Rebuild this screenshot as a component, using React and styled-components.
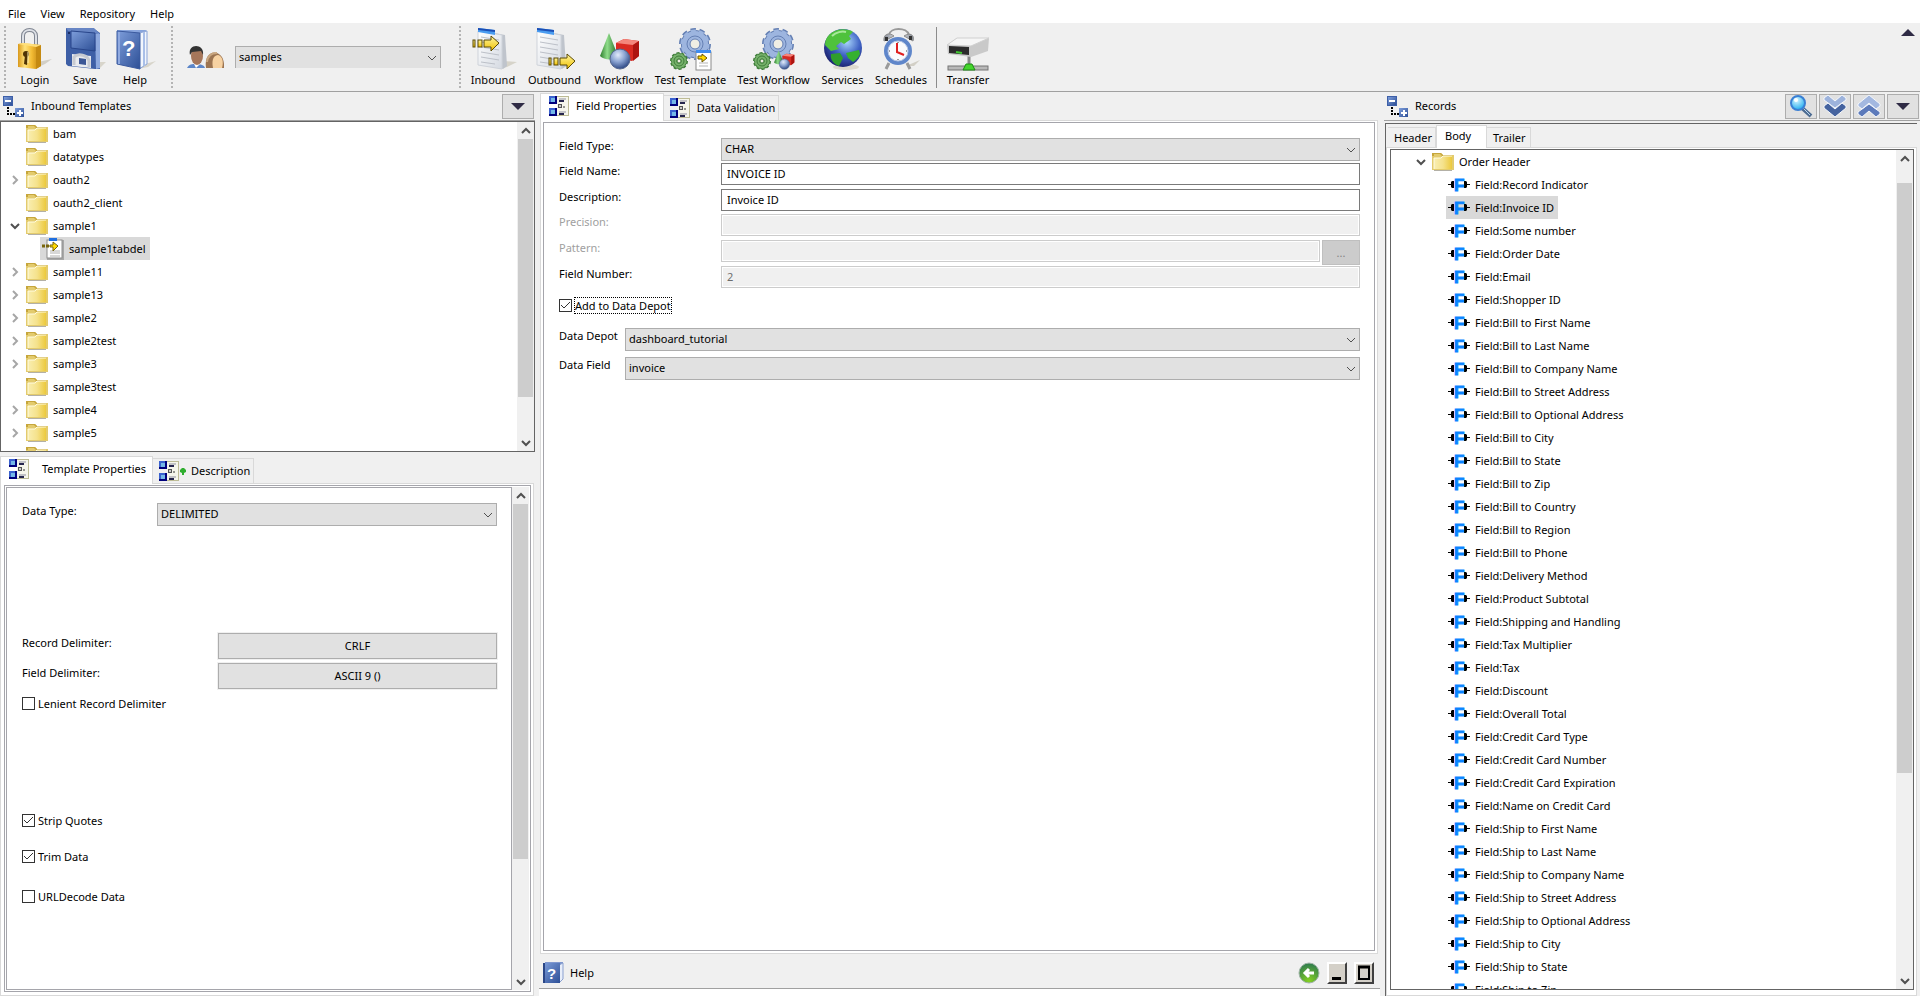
import React, { useState } from 'react';
import styled, { createGlobalStyle, css } from 'styled-components';

const GlobalStyle = createGlobalStyle`
  * {
    box-sizing: border-box;
  }

  body {
    margin: 0;
    background: #f0f0f0;
  }

  body, button, input, select {
    color: #000;
    font-family: 'Noto Sans', 'Open Sans', sans-serif;
    font-size: 11px;
    line-height: 16px;
  }

  svg {
    display: block;
    flex: none;
    overflow: visible;
  }
`;

/* ---------- layout ---------- */

const Page = styled.div`
  display: flex;
  flex-direction: column;
  height: 100vh;
  overflow: hidden;
`;

const MenuBar = styled.nav`
  display: flex;
  align-items: center;
  gap: 15px;
  height: 23px;
  padding: 5px 8px 0;
  background: #fff;
`;

const MenuItem = styled.button`
  padding: 0;
  border: 0;
  background: none;
`;

const Toolbar = styled.div`
  display: flex;
  height: 69px;
  padding: 3px 4px 2px;
  border-bottom: 1px solid #a0a0a0;
`;

const Handle = styled.div`
  width: 2px;
  margin: 0 ${(p) => p.$after || 0}px 0 ${(p) => p.$before || 0}px;
  background: repeating-linear-gradient(#b4b4b4 0 2px, #f0f0f0 2px 4px);
`;

const Separator = styled.div`
  width: 1px;
  margin: 1px 5px 1px 3px;
  background: #8c8c8c;
`;

const ToolButton = styled.button`
  display: flex;
  flex-direction: column;
  align-items: center;
  gap: 2px;
  width: ${(p) => p.$width}px;
  padding: 2px 0 0;
  border: 0;
  background: none;
  white-space: nowrap;
`;

const UserPicker = styled.div`
  display: flex;
  flex: none;
  gap: 11px;
  width: 286px;
  height: 42px;
  padding: 20px 18px 0 14px;
  overflow: hidden;
`;

const CollapseButton = styled.button`
  align-self: flex-start;
  margin-left: auto;
  padding: 3px 1px;
  border: 0;
  background: none;
`;

const Columns = styled.main`
  display: grid;
  flex: 1;
  grid-template-columns: minmax(0, 535fr) minmax(0, 841fr) minmax(0, 536fr);
  gap: 4px;
  min-height: 0;
`;

const LeftColumn = styled.div`
  display: grid;
  grid-template-rows: minmax(0, 360fr) minmax(0, 540fr);
  gap: 4px;
  min-height: 0;
`;

const Column = styled.section`
  display: flex;
  flex-direction: column;
  min-height: 0;
`;

const PanelHeader = styled.header`
  display: flex;
  align-items: center;
  gap: 2px;
  height: 29px;
  padding: 0 1px 0 3px;
  border-bottom: 1px solid #a0a0a0;
`;

const PanelTitle = styled.h2`
  flex: 1;
  margin: 0 0 0 5px;
  font-size: 11px;
  font-weight: 400;
`;

const IconButton = styled.button`
  display: flex;
  align-items: center;
  justify-content: center;
  width: 32px;
  height: 25px;
  padding: 0;
  border: 1px solid #adadad;
  background: #e1e1e1;
`;

/* ---------- trees ---------- */

const TreeBox = styled.div`
  display: flex;
  flex: 1;
  min-width: 0;
  min-height: 0;
  border: 1px solid #646464;
  background: #fff;
`;

const TreeList = styled.ul`
  flex: 1;
  margin: 0;
  padding: 0;
  overflow: hidden;
  list-style: none;
`;

const TreeRow = styled.li`
  display: flex;
  height: 23px;
  padding-left: ${(p) => p.$depth}px;
`;

const Twisty = styled.span`
  display: flex;
  align-items: center;
  justify-content: center;
  width: 15px;
  margin-right: 2px;
`;

const TreeItem = styled.span`
  display: flex;
  align-items: center;
  gap: 5px;
  padding: 0 4px 0 2px;
  white-space: nowrap;
  background: ${(p) => (p.$selected ? '#d9d9d9' : 'none')};
`;

const ScrollTrack = styled.div`
  display: flex;
  flex: none;
  flex-direction: column;
  width: 17px;
  padding: 0 1px;
  background: #f0f0f0;
`;

const ScrollArrow = styled.button`
  display: flex;
  flex: none;
  align-items: center;
  justify-content: center;
  height: 17px;
  padding: 0;
  border: 0;
  background: none;
`;

const ScrollPart = styled.div`
  flex: ${(p) => p.$size} 1 0;
  background: ${(p) => (p.$thumb ? '#cdcdcd' : 'none')};
`;

/* ---------- tabs ---------- */

const TabBar = styled.div`
  display: flex;
  align-items: flex-end;
  height: ${(p) => p.$height}px;
  margin: ${(p) => p.$inset || 0};
  padding-left: ${(p) => p.$indent || 0}px;
  border-bottom: 1px solid #d9d9d9;
`;

const Tab = styled.button`
  display: flex;
  flex: none;
  align-items: center;
  gap: ${(p) => p.$gap || 0}px;
  width: ${(p) => (p.$width ? `${p.$width}px` : 'auto')};
  height: ${(p) => p.$height}px;
  padding: 0 3px 0 6px;
  border: 1px solid #d9d9d9;
  border-bottom: 0;
  border-left: 0;
  background: #f0f0f0;
  white-space: nowrap;

  ${(p) =>
    p.$active &&
    css`
      height: ${p.$height + 3}px;
      margin-bottom: -1px;
      padding: 0 6px 3px 8px;
      border-left: 1px solid #d9d9d9;
      background: #fff;
    `}
`;

const TabPane = styled.div`
  display: flex;
  flex: 1;
  min-height: 0;
  margin: ${(p) => p.$inset || 0};
  padding: ${(p) => p.$pad || '1px 2px 2px'};
  border: 1px solid #d9d9d9;
  border-top: 0;
  background: #fff;
`;

const Frame = styled.div`
  flex: 1;
  min-width: 0;
  padding: 15px 14px 0 15px;
  border: 1px solid #a5a5ab;
`;

const PropertiesFrame = styled.div`
  display: flex;
  flex: 1;
  min-width: 0;
  padding: 1px;
  border: 1px solid #a5a5ab;
`;

/* ---------- form parts ---------- */

const FormRow = styled.div`
  display: grid;
  grid-template-columns: ${(p) => p.$label}px minmax(0, 1fr);
  align-items: start;
  height: ${(p) => p.$height}px;
`;

const Label = styled.label`
  padding-top: ${(p) => (p.$lower ? 2 : 0)}px;
  color: ${(p) => (p.$muted ? '#a0a0a0' : '#000')};
`;

const SelectBox = styled.span`
  display: grid;
  flex: 1;
  align-items: center;

  select, svg {
    grid-area: 1 / 1;
  }

  svg {
    justify-self: end;
    margin-right: 4px;
    pointer-events: none;
  }
`;

const StyledSelect = styled.select`
  width: 100%;
  height: 23px;
  padding: 0 4px 1px 3px;
  border: 1px solid #adadad;
  border-radius: 0;
  background: #e1e1e1;
  appearance: none;
`;

const TextInput = styled.input`
  width: 100%;
  height: 22px;
  padding: 0 5px 2px;
  border: 1px solid #7a7a7a;
  background: #fff;

  &:disabled {
    border-color: #ccc;
    box-shadow: inset 0 0 0 1px #fff;
    background: #f0f0f0;
    color: #6d6d6d;
  }
`;

const PatternCell = styled.div`
  display: flex;
  gap: 2px;
`;

const MoreButton = styled.button`
  flex: none;
  width: 38px;
  height: 25px;
  padding: 0;
  border: 1px solid #bfbfbf;
  background: #ccc;
  color: #838383;
`;

const WideButton = styled.button`
  height: 26px;
  padding: 0 0 1px;
  border: 1px solid #adadad;
  outline: 1px solid #f0f0f0;
  background: #e1e1e1;
`;

const CheckLabel = styled.label`
  display: flex;
  align-items: center;
  gap: 2px;
  height: 17px;
  margin-top: ${(p) => p.$top}px;
`;

const CheckBoxCell = styled.span`
  display: grid;

  input, svg {
    grid-area: 1 / 1;
  }

  svg {
    pointer-events: none;
  }
`;

const CheckInput = styled.input`
  width: 13px;
  height: 13px;
  margin: 0;
  border: 1px solid #333;
  background: #fff;
  appearance: none;
`;

const CheckText = styled.span`
  border: 1px ${(p) => (p.$focused ? 'dotted #000' : 'solid transparent')};
  line-height: 15px;
`;

const DepotRows = styled.div`
  margin-top: 14px;
`;

const HelpBar = styled.footer`
  display: flex;
  align-items: center;
  gap: 7px;
  height: 35px;
  padding: 6px 6px 2px 4px;
  border-bottom: 1px solid #a0a0a0;
`;

const HelpTitle = styled.span`
  flex: 1;
`;

const BareButton = styled.button`
  padding: 0;
  border: 0;
  background: none;
`;

const WindowButton = styled.button`
  display: flex;
  align-items: center;
  justify-content: center;
  width: 20px;
  height: 22px;
  padding: 0;
  border: 2px solid;
  border-color: #fff #404040 #404040 #fff;
  background: #d4d0c8;
`;

const BottomStrip = styled.div`
  height: 7px;
  background: #fff;
`;

const RecordsBody = styled.div`
  display: flex;
  flex: 1;
  flex-direction: column;
  min-height: 0;
  margin: 2px 3px 0 1px;
  padding: 1px 0 0;
  border-top: 1px solid #646464;
  border-left: 1px solid #646464;
`;

/* ---------- icons ---------- */

const Stop = ({ at, color }) => <stop offset={at} stopColor={color} />;

const Gradients = () => (
  <svg width="0" height="0" aria-hidden="true">
    <defs>
      <linearGradient id="gold">
        <Stop at="0" color="#d9981a" />
        <Stop at="0.3" color="#ffe27a" />
        <Stop at="0.6" color="#f3bb34" />
        <Stop at="1" color="#b97b0a" />
      </linearGradient>
      <linearGradient id="steel">
        <Stop at="0" color="#858b96" />
        <Stop at="0.5" color="#eef0f4" />
        <Stop at="1" color="#858b96" />
      </linearGradient>
      <linearGradient id="blue" x1="0" y1="0" x2="1" y2="1">
        <Stop at="0" color="#7e9edb" />
        <Stop at="1" color="#2d4f96" />
      </linearGradient>
      <linearGradient id="paper" x1="0" y1="0" x2="1" y2="1">
        <Stop at="0" color="#ffffff" />
        <Stop at="1" color="#d5dae2" />
      </linearGradient>
      <linearGradient id="arrow" x1="0" y1="0" x2="0" y2="1">
        <Stop at="0" color="#fff6a0" />
        <Stop at="1" color="#f0c000" />
      </linearGradient>
      <linearGradient id="cone">
        <Stop at="0" color="#2c7c2c" />
        <Stop at="0.4" color="#8fdc8a" />
        <Stop at="1" color="#1b661d" />
      </linearGradient>
      <linearGradient id="folder">
        <Stop at="0" color="#f9eeb0" />
        <Stop at="0.5" color="#f5e28c" />
        <Stop at="1" color="#ecc93c" />
      </linearGradient>
      <radialGradient id="ball" cx="0.4" cy="0.3" r="0.7">
        <Stop at="0" color="#e2ebfa" />
        <Stop at="0.5" color="#8ba4d2" />
        <Stop at="1" color="#2f4a86" />
      </radialGradient>
      <radialGradient id="sea" cx="0.6" cy="0.35" r="0.7">
        <Stop at="0" color="#a8d4fb" />
        <Stop at="0.5" color="#3f62c4" />
        <Stop at="1" color="#191f6b" />
      </radialGradient>
      <radialGradient id="lens" cx="0.4" cy="0.3" r="0.8">
        <Stop at="0" color="#d8f6ff" />
        <Stop at="1" color="#0aa4ee" />
      </radialGradient>
      <radialGradient id="green" cx="0.5" cy="0.9" r="0.9">
        <Stop at="0" color="#85d121" />
        <Stop at="1" color="#2d7a4f" />
      </radialGradient>
    </defs>
  </svg>
);

const ToolSvg = ({ children }) => (
  <svg width="42" height="42" viewBox="0 0 42 42" aria-hidden="true">
    {children}
  </svg>
);

const LoginIcon = () => (
  <ToolSvg>
    <path d="M24 34 L38 31 L31 36 L22 40 Z" fill="#d2cfc6" />
    <path d="M9 17 V8 C9 0 22 0 22 8 V17" fill="none" stroke="#7f8591" strokeWidth="4" />
    <path d="M9 17 V8 C9 0 22 0 22 8 V17" fill="none" stroke="#dde0e6" strokeWidth="2" />
    <path d="M4 16 L9 15 L27 17 V38 L22 41 L4 39 Z" fill="url(#gold)" />
    <path d="M22 19 L27 17 V38 L22 41 Z" fill="#c58a12" />
    <path d="M4 16 L9 15 L27 17 L22 19 Z" fill="#ffdf7c" />
    <circle cx="12" cy="26" r="3" fill="#4f3304" />
    <path d="M11 27 H14 L13 37 L10 36 Z" fill="#4f3304" />
    <path d="M14 24 V35" stroke="#fff0b0" />
  </ToolSvg>
);

const SaveIcon = () => (
  <ToolSvg>
    <path d="M33 34 L42 34 L36 40 H26 Z" fill="#d8d5cb" />
    <path d="M2 0 H29 L36 5 V41 L31 41 L4 38 L2 36 Z" fill="#3e5fa6" />
    <path d="M31 3 L36 6 V40 L32 41 Z" fill="#8ea9de" />
    <path d="M2 0 H30 L35 5 L33 6 L4 3 Z" fill="#6785c4" />
    <path d="M7 3 L31 5 V23 L7 20 Z" fill="url(#blue)" stroke="#28458a" />
    <path d="M8 26 L27 28 V40 L8 38 Z" fill="#e9ebef" />
    <path d="M10 37 V29 C14 25 24 27 25 33 V39" fill="none" stroke="#c7cad1" strokeWidth="3" />
    <path d="M15 30 L22 31 V37 L15 36 Z" fill="#3c5796" />
    <rect x="4" y="4" width="2" height="2" fill="#1c2f66" />
  </ToolSvg>
);

const HelpIcon = () => (
  <ToolSvg>
    <path d="M31 36 L42 33 L34 39 L24 41 Z" fill="#d8d5cb" />
    <path d="M3 2 H33 L27 6 H3 Z" fill="#88a5dd" />
    <path d="M25 5 L33 3 V36 L25 41 Z" fill="#f2f6fd" stroke="#8ba4d6" />
    <path d="M30 4 V38" stroke="#a9bfe8" strokeWidth="2" />
    <path d="M3 3 L26 5 V41 L3 36 Z" fill="url(#blue)" stroke="#3b5a9f" />
    <path d="M5 4 V36" stroke="#90aae0" strokeWidth="2" />
    <text x="8" y="28" fill="#fff" fontFamily="Liberation Sans, sans-serif" fontSize="22" fontWeight="700">?</text>
  </ToolSvg>
);

const SmallHelpIcon = () => (
  <svg width="20" height="22" viewBox="0 0 20 22" aria-hidden="true">
    <path d="M2 0 H20 V3 H2 Z" fill="#7f97cf" />
    <path d="M16 3 L20 1 V17 L16 21 Z" fill="#e8eefa" stroke="#8aa0d0" />
    <rect y="1" width="17" height="20" fill="url(#blue)" />
    <path d="M1 1 V21" stroke="#2b4787" strokeWidth="2" />
    <text x="4" y="17" fill="#fff" fontFamily="Liberation Sans, sans-serif" fontSize="15" fontWeight="700">?</text>
  </svg>
);

const UsersIcon = () => (
  <svg width="37" height="22" viewBox="0 0 37 22" aria-hidden="true">
    <path d="M0 22 C2 18 5 18 9 18 C14 18 17 19 18 22 Z" fill="#5d86c8" />
    <path d="M7 18 L9 22 L13 18 Z" fill="#fff" />
    <ellipse cx="10" cy="10" rx="6" ry="9" fill="#a6765a" />
    <path d="M3 9 C0 -3 18 -3 16 9 L14 5 L5 6 Z" fill="#333" />
    <path d="M19 22 C16 2 36 2 37 18 V22 Z" fill="#9c7451" />
    <path d="M20 16 C21 8 26 7 30 7" fill="none" stroke="#c9a67f" strokeWidth="2" />
    <path d="M26 22 C24 12 28 9 31 9 C35 10 37 15 35 22 Z" fill="#f7d2a2" />
  </svg>
);

const PageShape = () => (
  <>
    <path d="M28 33 L42 34 L32 39 L24 41 Z" fill="#d6d3c9" />
    <path d="M4 2 L30 7 L32 38 L28 41 L4 36 Z" fill="#bfc4cc" />
    <path d="M3 3 L27 7 V41 L3 37 Z" fill="url(#paper)" stroke="#cfd3da" />
    <path d="M3 0 L20 2 V7 L3 4 Z" fill="#4a9cf0" />
    <path d="M3 0 L20 2 V4 L3 2 Z" fill="#1b4fb5" />
    <path d="M6 9 L24 12 M6 14 L24 17 M6 19 L24 22 M6 24 L24 27 M6 29 L24 32 M6 34 L20 36" stroke="#bcc0c8" />
  </>
);

const ArrowShape = () => (
  <g fill="url(#arrow)" stroke="#5b4a05">
    <rect x="1" y="5" width="2" height="7" />
    <rect x="6" y="5" width="4" height="7" />
    <path d="M12 5 H19 V1 L27 8 L19 16 V12 H12 Z" />
  </g>
);

const InboundIcon = () => (
  <ToolSvg>
    <g transform="translate(3)"><PageShape /></g>
    <g transform="translate(0 7)"><ArrowShape /></g>
  </ToolSvg>
);

const OutboundIcon = () => (
  <ToolSvg>
    <PageShape />
    <g transform="translate(14 25)"><ArrowShape /></g>
  </ToolSvg>
);

const ShapesDrawing = () => (
  <>
    <path d="M18 15 L26 11 L41 13 V28 L34 33 L18 30 Z" fill="#d92a22" />
    <path d="M18 15 L26 11 L41 13 L35 17 Z" fill="#f4867c" />
    <path d="M35 17 L41 13 V28 L35 33 Z" fill="#ad1410" />
    <path d="M11 5 L20 28 C16 33 6 32 2 28 Z" fill="url(#cone)" />
    <circle cx="22" cy="31" r="10" fill="url(#ball)" stroke="#56688e" />
  </>
);

const WorkflowIcon = () => (
  <ToolSvg>
    <ShapesDrawing />
  </ToolSvg>
);

// ten teeth, drawn as a dashed ring around the wheel
const Gear = ({ cx, cy, r, color, edge, hole }) => (
  <g fill="none">
    <circle cx={cx} cy={cy} r={r - 1} stroke={edge} strokeWidth="4" pathLength="100" strokeDasharray="6 4" />
    <circle cx={cx} cy={cy} r={r * 0.6} stroke={edge} strokeWidth={r * 0.55 + 2} />
    <circle cx={cx} cy={cy} r={r - 2} stroke={color} strokeWidth="3" pathLength="100" strokeDasharray="6 4" />
    <circle cx={cx} cy={cy} r={r * 0.6} stroke={color} strokeWidth={r * 0.55} />
    <circle cx={cx} cy={cy} r={hole + 3} stroke={edge} />
    <circle cx={cx} cy={cy} r={hole} fill="#f0eee4" stroke={edge} />
  </g>
);

const Gears = () => (
  <>
    <Gear cx={25} cy={16} r={15} color="#9db5df" edge="#6580b4" hole={5} />
    <Gear cx={9} cy={33} r={8} color="#77b26c" edge="#3f7d3a" hole={2} />
  </>
);

const TestTemplateIcon = () => (
  <ToolSvg>
    <Gears />
    <rect x="26" y="24" width="15" height="18" fill="#fff" stroke="#8a8a8a" />
    <rect x="26" y="22" width="15" height="3" fill="#3f8cf0" />
    <path d="M29 35 H38 M29 38 H38" stroke="#b5b5b5" />
    <path d="M28 28 H32 V26 L37 30 L32 34 V31 H28 Z" fill="#ffd800" stroke="#6b5600" />
  </ToolSvg>
);

const TestWorkflowIcon = () => (
  <ToolSvg>
    <Gears />
    <g transform="translate(20 20) scale(0.52)"><ShapesDrawing /></g>
  </ToolSvg>
);

const ServicesIcon = () => (
  <ToolSvg>
    <ellipse cx="24" cy="39" rx="13" ry="3" fill="#dcd9cf" />
    <circle cx="21" cy="20" r="19" fill="url(#sea)" />
    <path d="M8 6 C14 0 26 0 31 4 L27 8 L29 11 L22 16 L19 14 L14 18 L17 21 L9 23 L3 17 C3 12 5 9 8 6 Z" fill="#4fc23c" />
    <path d="M9 26 L18 25 L21 30 L17 38 C12 36 8 32 9 26 Z" fill="#2f9e2c" />
    <path d="M24 25 L37 22 L38 26 C36 30 34 32 31 34 L26 30 Z" fill="#35b130" />
    <path d="M10 8 C14 4 20 3 24 4" stroke="#a7e89a" strokeWidth="2" fill="none" />
  </ToolSvg>
);

const SchedulesIcon = () => (
  <ToolSvg>
    <path d="M26 38 L40 32 L34 38 Z" fill="#d2cfc6" />
    <path d="M9 7 C10 -1 27 -1 29 7" fill="none" stroke="#9a9a9a" strokeWidth="2" />
    <path d="M4 13 C3 6 9 4 14 8 Z M24 8 C30 4 35 7 33 13 Z" fill="url(#steel)" stroke="#8b8b8b" />
    <rect x="5" y="9" width="3" height="4" fill="#333" />
    <rect x="29" y="8" width="3" height="4" fill="#333" />
    <path d="M9 35 L6 41 M27 35 L30 41" stroke="#9a9a9a" strokeWidth="3" />
    <circle cx="18" cy="23" r="14" fill="#5f86ca" />
    <circle cx="18" cy="23" r="10" fill="#fafbfd" stroke="#b9c8e4" />
    <path d="M17 15 V24 L24 27" fill="none" stroke="#e01f1f" strokeWidth="2" />
    <path d="M18 14 V15 M18 31 V32 M9 23 H10 M26 23 H27" stroke="#444" />
  </ToolSvg>
);

const TransferIcon = () => (
  <ToolSvg>
    <path d="M22 27 V38" stroke="#8a8a8a" strokeWidth="3" />
    <rect x="1" y="38" width="40" height="4" fill="#b8b8b8" stroke="#757575" />
    <path d="M16 42 L19 36 H25 L28 42 Z" fill="#45d52c" stroke="#1c8a14" />
    <path d="M0 17 L10 10 H42 L41 23 L24 29 L1 26 Z" fill="#c9c9c9" />
    <path d="M0 17 L10 10 H42 L24 18 Z" fill="#f6f6f6" stroke="#d0d0d0" />
    <path d="M2 18 L22 19 V27 L2 25 Z" fill="#2c2c2c" />
    <path d="M9 24 L15 25" stroke="#41c931" strokeWidth="2" />
  </ToolSvg>
);

const FolderIcon = () => (
  <svg width="22" height="18" viewBox="0 0 22 18" aria-hidden="true">
    <path d="M2 17 H20 V18 H2 Z" fill="#b3b0a6" />
    <path d="M0 0 H9 L11 2 H22 V17 H0 Z" fill="#e3cb6d" />
    <path d="M0 0 H9 L11 2 H20 V3 H10 L8 1 H2 V3 H0 Z" fill="#c6a63c" />
    <path d="M2 5 H9 L11 3 H20 V16 H2 Z" fill="url(#folder)" />
    <path d="M2 16 V5 H9 L11 3 H20" fill="none" stroke="#fffbe0" />
  </svg>
);

const TemplateIcon = () => (
  <svg width="22" height="22" viewBox="0 0 22 22" aria-hidden="true">
    <rect x="5" y="2" width="17" height="20" fill="#a8a8a8" />
    <rect x="5" y="2" width="15" height="18" fill="#fff" stroke="#8d8d8d" />
    <rect x="7" width="8" height="3" fill="#1f6fe0" />
    <path d="M8 13 H18 M8 15 H18 M8 18 H18" stroke="#b0b0b0" />
    <path d="M0 8 H3 M4 8 H7" stroke="#77650d" strokeWidth="3" />
    <path d="M8 7 H11 V4 L16 8 L11 13 V9 H8 Z" fill="#ffd900" stroke="#77650d" />
  </svg>
);

const FieldIcon = () => (
  <svg width="22" height="16" viewBox="0 0 22 16" aria-hidden="true">
    <path d="M6 4 V11 H4 L3 10 V8 H0 V7 H3 V5 L4 4 Z" fill="#000" />
    <path d="M16 4 V11 H18 L19 10 V8 H22 V7 H19 V5 L18 4 Z" fill="#000" />
    <text
      x="6"
      y="14"
      fill="#0a84ff"
      stroke="#0a84ff"
      fontFamily="Liberation Sans, sans-serif"
      fontSize="17"
      fontWeight="700"
    >
      F
    </text>
  </svg>
);

const PropsIcon = ({ dot }) => (
  <svg width={dot ? 27 : 20} height="20" viewBox={dot ? '0 0 27 20' : '0 0 20 20'} aria-hidden="true">
    <rect x="8" width="12" height="20" fill="#bdbb95" />
    <rect x="8" y="1" width="11" height="18" fill="#f6f6ec" />
    <rect width="8" height="8" fill="#00007c" />
    <rect width="6" height="6" fill="#3a62cf" />
    <rect x="2" y="2" width="4" height="4" fill="#74b8e8" />
    <rect y="12" width="8" height="8" fill="#00007c" />
    <rect y="12" width="6" height="6" fill="#3a62cf" />
    <rect x="2" y="14" width="4" height="4" fill="#74b8e8" />
    <path d="M10 3 H17 M10 16 H17" stroke="#8f8fa0" />
    <path d="M10 5 H15 M10 18 H15" stroke="#26264d" strokeWidth="2" />
    <rect x="9" y="8" width="4" height="4" fill="#555" />
    <rect x="10" y="9" width="2" height="2" fill="#ccc" />
    <path d="M14 11 H16" stroke="#333" />
    {dot && <path d="M23 7 H25 L27 9 V11 L25 12 V14 H23 V12 L21 11 V9 Z" fill="#2fae2f" />}
  </svg>
);

const TreeIcon = () => (
  <svg width="21" height="21" viewBox="0 0 21 21" aria-hidden="true">
    <rect width="10" height="10" fill="#3d5fa8" />
    <rect x="1" y="1" width="8" height="8" fill="url(#blue)" />
    <rect x="2" y="4" width="6" height="2" fill="#fff" />
    <path d="M5 11 V18 H12" fill="none" stroke="#000" strokeWidth="2" strokeDasharray="2 1" />
    <rect x="12" y="12" width="9" height="9" fill="url(#blue)" />
    <path d="M17 14 V20 M14 17 H20" stroke="#fff" strokeWidth="2" />
  </svg>
);

const Triangle = ({ up }) => (
  <svg width="14" height="7" viewBox="0 0 14 7" aria-hidden="true">
    <path d={up ? 'M0 7 L7 0 L14 7 Z' : 'M0 0 H14 L7 7 Z'} fill="#2f2b45" />
  </svg>
);

const SearchIcon = () => (
  <svg width="22" height="22" viewBox="0 0 22 22" aria-hidden="true">
    <path d="M12 13 L21 21" stroke="#4d6c92" strokeWidth="4" />
    <path d="M13 13 L20 20" stroke="#b9d6ee" />
    <circle cx="8" cy="8" r="7" fill="url(#lens)" stroke="#3a7fd4" strokeWidth="2" />
    <circle cx="6" cy="5" r="2" fill="#fff" />
  </svg>
);

const DoubleChevron = ({ up }) => (
  <svg width="22" height="22" viewBox="0 0 22 22" aria-hidden="true">
    <g transform={up ? 'matrix(1 0 0 -1 0 22)' : undefined} stroke="#f4f7fc">
      <path d="M0 3 L4 0 L11 6 L18 0 L22 3 V5 L11 13 L0 5 Z" fill={up ? '#5c7abb' : '#9db3dc'} />
      <path d="M0 11 L4 8 L11 14 L18 8 L22 11 V13 L11 22 L0 13 Z" fill={up ? '#a3b8e0' : '#45639f'} />
    </g>
  </svg>
);

const CHEVRONS = {
  down: 'M1 2 L5 6 L9 2',
  up: 'M1 6 L5 2 L9 6',
  right: 'M3 0 L7 4 L3 8',
};

const Chevron = ({ dir, color = '#505050', weight = 2 }) => (
  <svg width="10" height="8" viewBox="0 0 10 8" aria-hidden="true">
    <path d={CHEVRONS[dir]} fill="none" stroke={color} strokeWidth={weight} />
  </svg>
);

const BackIcon = () => (
  <svg width="22" height="22" viewBox="0 0 22 22" aria-hidden="true">
    <circle cx="11" cy="11" r="10" fill="url(#green)" stroke="#9fb3a6" />
    <path d="M16 11 H8 M11 7 L7 11 L11 15" fill="none" stroke="#fff" strokeWidth="3" />
  </svg>
);

/* ---------- shared controls ---------- */

const Select = ({ id, value, label }) => (
  <SelectBox>
    <StyledSelect id={id} aria-label={label} defaultValue={value}>
      <option>{value}</option>
    </StyledSelect>
    <Chevron dir="down" weight={1} />
  </SelectBox>
);

const Check = ({ label, initial = false, top, focused }) => {
  const [checked, setChecked] = useState(initial);

  return (
    <CheckLabel $top={top}>
      <CheckBoxCell>
        <CheckInput type="checkbox" checked={checked} onChange={(e) => setChecked(e.target.checked)} />
        {checked && (
          <svg width="13" height="13" viewBox="0 0 13 13" aria-hidden="true">
            <path d="M2 6 L5 9 L11 3" fill="none" stroke="#333" />
          </svg>
        )}
      </CheckBoxCell>
      <CheckText $focused={focused}>{label}</CheckText>
    </CheckLabel>
  );
};

const Scrollbar = ({ before = 0, thumb, after }) => (
  <ScrollTrack>
    <ScrollArrow aria-label="Scroll up">
      <Chevron dir="up" />
    </ScrollArrow>
    <ScrollPart $size={before} />
    <ScrollPart $size={thumb} $thumb />
    <ScrollPart $size={after} />
    <ScrollArrow aria-label="Scroll down">
      <Chevron dir="down" />
    </ScrollArrow>
  </ScrollTrack>
);

/* ---------- data ---------- */

const mainTools = [
  { name: 'Login', icon: <LoginIcon />, width: 50 },
  { name: 'Save', icon: <SaveIcon />, width: 50 },
  { name: 'Help', icon: <HelpIcon />, width: 50 },
];

const viewTools = [
  { name: 'Inbound', icon: <InboundIcon />, width: 56 },
  { name: 'Outbound', icon: <OutboundIcon />, width: 67 },
  { name: 'Workflow', icon: <WorkflowIcon />, width: 62 },
  { name: 'Test Template', icon: <TestTemplateIcon />, width: 81 },
  { name: 'Test Workflow', icon: <TestWorkflowIcon />, width: 85 },
  { name: 'Services', icon: <ServicesIcon />, width: 53 },
  { name: 'Schedules', icon: <SchedulesIcon />, width: 64 },
];

const templates = [
  { name: 'bam' },
  { name: 'datatypes' },
  { name: 'oauth2', state: 'closed' },
  { name: 'oauth2_client' },
  { name: 'sample1', state: 'open' },
  { name: 'sample1tabdel', leaf: true },
  { name: 'sample11', state: 'closed' },
  { name: 'sample13', state: 'closed' },
  { name: 'sample2', state: 'closed' },
  { name: 'sample2test', state: 'closed' },
  { name: 'sample3', state: 'closed' },
  { name: 'sample3test' },
  { name: 'sample4', state: 'closed' },
  { name: 'sample5', state: 'closed' },
  { name: '' },
];

const recordFields = [
  'Record Indicator', 'Invoice ID', 'Some number', 'Order Date', 'Email', 'Shopper ID',
  'Bill to First Name', 'Bill to Last Name', 'Bill to Company Name', 'Bill to Street Address',
  'Bill to Optional Address', 'Bill to City', 'Bill to State', 'Bill to Zip', 'Bill to Country',
  'Bill to Region', 'Bill to Phone', 'Delivery Method', 'Product Subtotal', 'Shipping and Handling',
  'Tax Multiplier', 'Tax', 'Discount', 'Overall Total', 'Credit Card Type', 'Credit Card Number',
  'Credit Card Expiration', 'Name on Credit Card', 'Ship to First Name', 'Ship to Last Name',
  'Ship to Company Name', 'Ship to Street Address', 'Ship to Optional Address', 'Ship to City',
  'Ship to State', 'Ship to Zip',
];

/* ---------- panels ---------- */

const Tool = ({ name, icon, width }) => (
  <ToolButton $width={width}>
    {icon}
    {name}
  </ToolButton>
);

const TopToolbar = () => (
  <Toolbar>
    <Handle $after={4} />
    {mainTools.map((t) => <Tool key={t.name} {...t} />)}
    <Handle $before={11} />
    <UserPicker>
      <UsersIcon />
      <Select label="Project" value="samples" />
    </UserPicker>
    <Handle $after={4} />
    {viewTools.map((t) => <Tool key={t.name} {...t} />)}
    <Separator />
    <Tool name="Transfer" icon={<TransferIcon />} width={52} />
    <CollapseButton aria-label="Collapse toolbar">
      <Triangle up />
    </CollapseButton>
  </Toolbar>
);

const InboundTemplates = () => (
  <Column>
    <PanelHeader>
      <TreeIcon />
      <PanelTitle>Inbound Templates</PanelTitle>
      <IconButton aria-label="Panel menu">
        <Triangle />
      </IconButton>
    </PanelHeader>
    <TreeBox>
      <TreeList role="tree">
        {templates.map(({ name, state, leaf }) => (
          <TreeRow key={name} role="treeitem" $depth={leaf ? 22 : 6}>
            <Twisty>
              {state === 'open' && <Chevron dir="down" />}
              {state === 'closed' && <Chevron dir="right" color="#a6a6a6" />}
            </Twisty>
            <TreeItem $selected={leaf}>
              {leaf ? <TemplateIcon /> : <FolderIcon />}
              {name}
            </TreeItem>
          </TreeRow>
        ))}
      </TreeList>
      <Scrollbar thumb={258} after={37} />
    </TreeBox>
  </Column>
);

const TemplateProperties = () => (
  <Column>
    <TabBar $height={28} $inset="0 1px 0 0" role="tablist">
      <Tab $active $gap={13} $height={25} role="tab">
        <PropsIcon />
        Template Properties
      </Tab>
      <Tab $gap={5} $height={25} role="tab">
        <PropsIcon dot />
        Description
      </Tab>
    </TabBar>
    <TabPane $pad="1px 2px 3px 3px" $inset="0 1px 0 0">
      <PropertiesFrame>
        <Frame>
          <FormRow $label={135} $height={130}>
            <Label htmlFor="dataType">Data Type:</Label>
            <Select id="dataType" value="DELIMITED" />
          </FormRow>
          <FormRow $label={196} $height={30}>
            <Label $lower htmlFor="recordDelimiter">Record Delimiter:</Label>
            <WideButton id="recordDelimiter">CRLF</WideButton>
          </FormRow>
          <FormRow $label={196} $height={30}>
            <Label $lower htmlFor="fieldDelimiter">Field Delimiter:</Label>
            <WideButton id="fieldDelimiter">ASCII 9 ()</WideButton>
          </FormRow>
          <Check label="Lenient Record Delimiter" top={2} />
          <Check label="Strip Quotes" initial top={100} />
          <Check label="Trim Data" initial top={19} />
          <Check label="URLDecode Data" top={23} />
        </Frame>
        <Scrollbar thumb={354} after={114} />
      </PropertiesFrame>
    </TabPane>
  </Column>
);

const FieldProperties = () => (
  <Column>
    <TabBar $height={29} $inset="0 2px 0 1px" role="tablist">
      <Tab $active $gap={7} $height={25} role="tab">
        <PropsIcon />
        Field Properties
      </Tab>
      <Tab $gap={7} $height={25} role="tab">
        <PropsIcon />
        Data Validation
      </Tab>
    </TabBar>
    <TabPane $inset="0 2px 0 1px">
      <Frame>
        <FormRow $label={162} $height={25}>
          <Label htmlFor="fieldType">Field Type:</Label>
          <Select id="fieldType" value="CHAR" />
        </FormRow>
        <FormRow $label={162} $height={26}>
          <Label htmlFor="fieldName">Field Name:</Label>
          <TextInput id="fieldName" defaultValue="INVOICE ID" />
        </FormRow>
        <FormRow $label={162} $height={25}>
          <Label htmlFor="description">Description:</Label>
          <TextInput id="description" defaultValue="Invoice ID" />
        </FormRow>
        <FormRow $label={162} $height={26}>
          <Label $muted htmlFor="precision">Precision:</Label>
          <TextInput id="precision" disabled />
        </FormRow>
        <FormRow $label={162} $height={26}>
          <Label $muted htmlFor="pattern">Pattern:</Label>
          <PatternCell>
            <TextInput id="pattern" disabled />
            <MoreButton disabled>...</MoreButton>
          </PatternCell>
        </FormRow>
        <FormRow $label={162} $height={26}>
          <Label htmlFor="fieldNumber">Field Number:</Label>
          <TextInput id="fieldNumber" defaultValue="2" disabled />
        </FormRow>
        <Check label="Add to Data Depot" initial focused top={5} />
        <DepotRows>
          <FormRow $label={66} $height={29}>
            <Label htmlFor="dataDepot">Data Depot</Label>
            <Select id="dataDepot" value="dashboard_tutorial" />
          </FormRow>
          <FormRow $label={66} $height={29}>
            <Label htmlFor="dataField">Data Field</Label>
            <Select id="dataField" value="invoice" />
          </FormRow>
        </DepotRows>
      </Frame>
    </TabPane>
    <HelpBar>
      <SmallHelpIcon />
      <HelpTitle>Help</HelpTitle>
      <BareButton aria-label="Back">
        <BackIcon />
      </BareButton>
      <WindowButton aria-label="Minimize">
        <svg width="14" height="16" viewBox="0 0 14 16" aria-hidden="true">
          <rect x="2" y="12" width="9" height="3" />
        </svg>
      </WindowButton>
      <WindowButton aria-label="Maximize">
        <svg width="14" height="16" viewBox="0 0 14 16" aria-hidden="true">
          <path d="M2 2 H12 V14 H2 Z" fill="none" stroke="#000" strokeWidth="2" />
          <path d="M1 2 H13" stroke="#000" strokeWidth="3" />
        </svg>
      </WindowButton>
    </HelpBar>
    <BottomStrip />
  </Column>
);

const Records = () => (
  <Column>
    <PanelHeader>
      <TreeIcon />
      <PanelTitle>Records</PanelTitle>
      <IconButton aria-label="Search"><SearchIcon /></IconButton>
      <IconButton aria-label="Expand all"><DoubleChevron /></IconButton>
      <IconButton aria-label="Collapse all"><DoubleChevron up /></IconButton>
      <IconButton aria-label="Panel menu"><Triangle /></IconButton>
    </PanelHeader>
    <RecordsBody>
      <TabBar $height={23} $indent={2} role="tablist">
        <Tab $height={20} $width={48} role="tab">Header</Tab>
        <Tab $active $height={20} $width={51} role="tab">Body</Tab>
        <Tab $height={20} $width={44} role="tab">Trailer</Tab>
      </TabBar>
      <TabPane $pad="1px 2px 5px 3px">
        <TreeBox>
          <TreeList role="tree">
            <TreeRow role="treeitem" $depth={22}>
              <Twisty>
                <Chevron dir="down" />
              </Twisty>
              <TreeItem>
                <FolderIcon />
                Order Header
              </TreeItem>
            </TreeRow>
            {recordFields.map((name) => (
              <TreeRow key={name} role="treeitem" $depth={55}>
                <TreeItem $selected={name === 'Invoice ID'}>
                  <FieldIcon />
                  Field:{name}
                </TreeItem>
              </TreeRow>
            ))}
          </TreeList>
          <Scrollbar before={16} thumb={590} after={199} />
        </TreeBox>
      </TabPane>
    </RecordsBody>
  </Column>
);

const App = () => (
  <Page>
    <GlobalStyle />
    <Gradients />
    <MenuBar>
      {['File', 'View', 'Repository', 'Help'].map((item) => (
        <MenuItem key={item}>{item}</MenuItem>
      ))}
    </MenuBar>
    <TopToolbar />
    <Columns>
      <LeftColumn>
        <InboundTemplates />
        <TemplateProperties />
      </LeftColumn>
      <FieldProperties />
      <Records />
    </Columns>
  </Page>
);

export default App;
